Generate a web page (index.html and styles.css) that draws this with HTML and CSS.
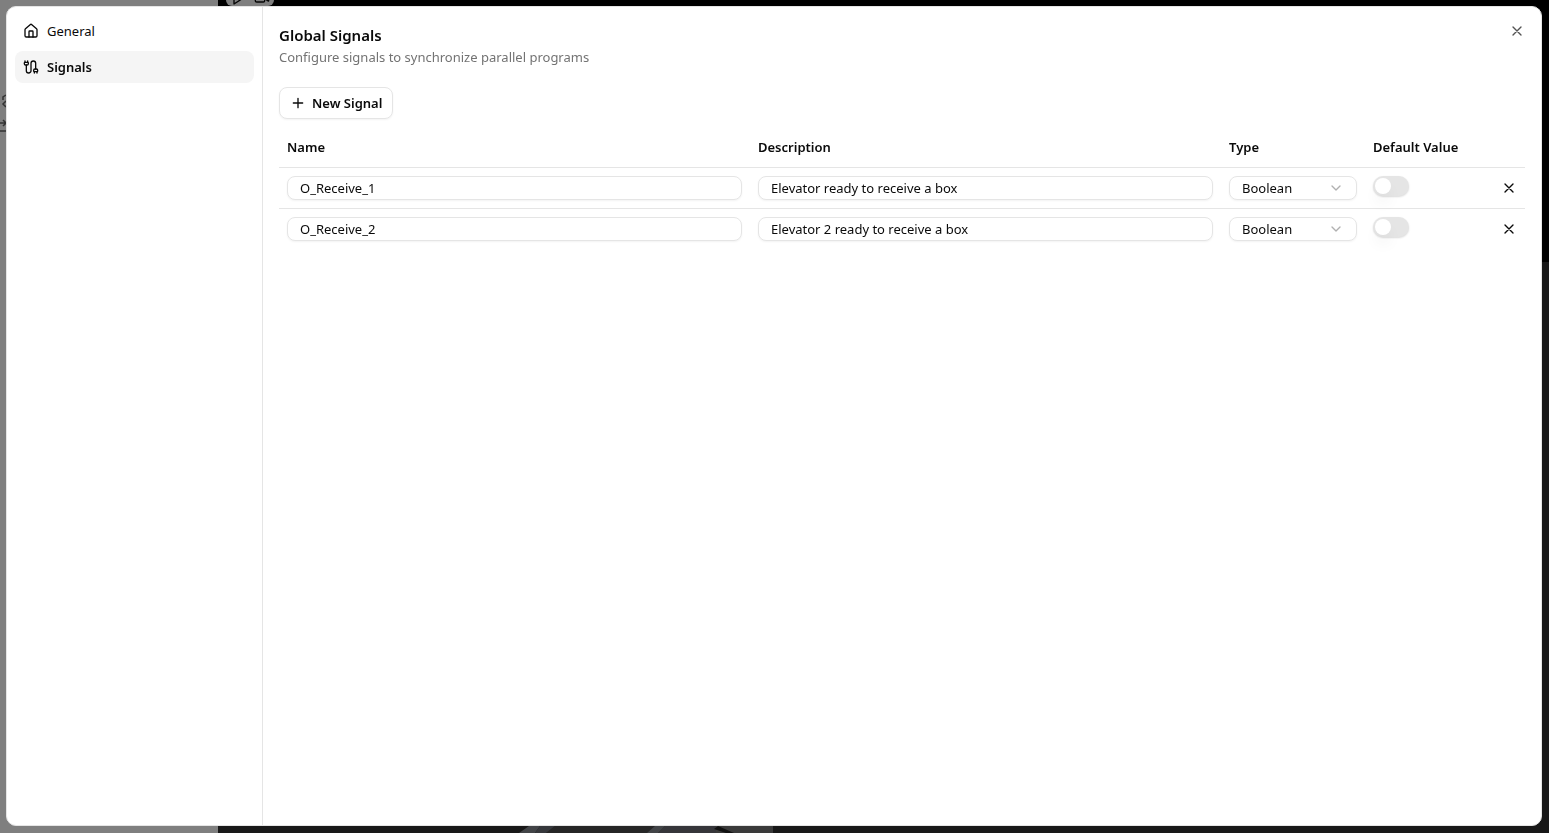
FILE: index.html
```html
<!DOCTYPE html>
<html lang="en">
<head>
    <meta charset="UTF-8">
    <meta name="viewport" content="width=device-width, initial-scale=1.0">
    <title>Settings - Global Signals</title>
    <link rel="stylesheet" href="styles.css">
</head>
<body>
    <!-- Editor behind the dialog -->
    <div class="editor" aria-hidden="true">
        <div class="editor-panel">
            <svg width="8" height="40" viewBox="0 0 8 40" fill="none" stroke="#666" stroke-width="1.5">
                <path d="M3 6V3l3-2M6 7L3 10l3 3M0 29h6M3 26l3 3-3 3M0 37h8"/>
            </svg>
        </div>
        <div class="editor-view">
            <div class="view-tools">
                <svg width="16" height="16" viewBox="0 0 24 24" class="icon"><path d="m6 3 14 9-14 9z"/></svg>
                <svg width="16" height="16" viewBox="0 0 24 24" class="icon"><path d="m16 13 5.2 3.5a.5.5 0 0 0 .8-.4V7.900a.5.5 0 0 0-.8-.4L16 10.500"/><rect x="2" y="6" width="14" height="12" rx="2"/></svg>
            </div>
            <div class="view-floor">
                <svg width="600" height="7" viewBox="0 0 600 7">
                    <path fill="#4c4c4c" d="M337 0H555V7H328z"/>
                    <path fill="#84898f" d="M311 0H322L317 7H301zM437 0H447L440 7H429z"/>
                    <path fill="#6c7078" d="M322 0H337L328 7H317z"/>
                    <path fill="#6c6d75" d="M447 0H498V7H440z"/>
                    <path fill="#747474" d="M498 0H555V7H498z"/>
                    <path fill="#222" d="M500 0L516 7H508L496 3z"/>
                </svg>
            </div>
        </div>
    </div>
    <div class="overlay"></div>

    <div class="dialog" role="dialog" aria-labelledby="dialog-title">
        <nav class="sidebar">
            <button type="button" class="nav-item">
                <svg width="16" height="16" viewBox="0 0 24 24" class="icon">
                    <path d="M15 21v-8a1 1 0 0 0-1-1h-4a1 1 0 0 0-1 1v8"/>
                    <path d="M3 10a2 2 0 0 1 .709-1.528l7-5.999a2 2 0 0 1 2.582 0l7 5.999A2 2 0 0 1 21 10v9a2 2 0 0 1-2 2H5a2 2 0 0 1-2-2z"/>
                </svg>
                General
            </button>
            <button type="button" class="nav-item active">
                <svg width="16" height="16" viewBox="0 0 24 24" class="icon">
                    <path d="M17 21v-2a1 1 0 0 1-1-1v-1a2 2 0 0 1 2-2h2a2 2 0 0 1 2 2v1a1 1 0 0 1-1 1"/>
                    <path d="M19 15V6.500a1 1 0 0 0-7 0v11a1 1 0 0 1-7 0V9"/>
                    <path d="M21 21v-2h-4"/>
                    <path d="M3 5h4V3"/>
                    <path d="M7 5a1 1 0 0 1 1 1v1a2 2 0 0 1-2 2H4a2 2 0 0 1-2-2V6a1 1 0 0 1 1-1V3"/>
                </svg>
                Signals
            </button>
        </nav>

        <main class="content">
            <h2 id="dialog-title">Global Signals</h2>
            <p class="subtitle">Configure signals to synchronize parallel programs</p>

            <button type="button" class="new-signal">
                <svg width="16" height="16" viewBox="0 0 24 24" class="icon"><path d="M5 12h14M12 5v14"/></svg>
                New Signal
            </button>

            <table class="signals">
                <thead>
                    <tr>
                        <th>Name</th>
                        <th>Description</th>
                        <th class="col-type">Type</th>
                        <th class="col-default">Default Value</th>
                        <th class="col-remove"></th>
                    </tr>
                </thead>
                <tbody>
                    <tr>
                        <td><input type="text" class="field" value="O_Receive_1" aria-label="Name"></td>
                        <td><input type="text" class="field" value="Elevator ready to receive a box" aria-label="Description"></td>
                        <td>
                            <div class="select">
                                <select class="field" aria-label="Type">
                                    <option>Boolean</option>
                                </select>
                                <svg width="16" height="16" viewBox="0 0 24 24" class="icon"><path d="m6 9 6 6 6-6"/></svg>
                            </div>
                        </td>
                        <td><input type="checkbox" class="switch" role="switch" aria-label="Default Value"></td>
                        <td>
                            <button type="button" class="icon-button" aria-label="Remove">
                                <svg width="16" height="16" viewBox="0 0 24 24" class="icon"><path d="M18 6 6 18M6 6l12 12"/></svg>
                            </button>
                        </td>
                    </tr>
                    <tr>
                        <td><input type="text" class="field" value="O_Receive_2" aria-label="Name"></td>
                        <td><input type="text" class="field" value="Elevator 2 ready to receive a box" aria-label="Description"></td>
                        <td>
                            <div class="select">
                                <select class="field" aria-label="Type">
                                    <option>Boolean</option>
                                </select>
                                <svg width="16" height="16" viewBox="0 0 24 24" class="icon"><path d="m6 9 6 6 6-6"/></svg>
                            </div>
                        </td>
                        <td><input type="checkbox" class="switch" role="switch" aria-label="Default Value"></td>
                        <td>
                            <button type="button" class="icon-button" aria-label="Remove">
                                <svg width="16" height="16" viewBox="0 0 24 24" class="icon"><path d="M18 6 6 18M6 6l12 12"/></svg>
                            </button>
                        </td>
                    </tr>
                </tbody>
            </table>
        </main>

        <button type="button" class="icon-button close" aria-label="Close">
            <svg width="16" height="16" viewBox="0 0 24 24" class="icon"><path d="M18 6 6 18M6 6l12 12"/></svg>
        </button>
    </div>
</body>
</html>
```
FILE: styles.css
```css
* {
    box-sizing: border-box;
}
body {
    margin: 0;
    font-family: "Segoe UI", "Noto Sans", "Open Sans", sans-serif;
    font-size: 13px;
    line-height: 20px;
    color: #0a0a0a;
}
button, input, select {
    font: inherit;
    color: inherit;
}
button {
    cursor: pointer;
}
.icon {
    flex: none;
    fill: none;
    stroke: currentColor;
    stroke-width: 2;
    stroke-linecap: round;
    stroke-linejoin: round;
}

/* Editor background */
.editor {
    display: flex;
    height: 100vh;
    overflow: hidden;
}
.editor-panel {
    width: 218px;
    padding-top: 94px;
    background: #fff;
}
.editor-view {
    flex: 1;
    display: flex;
    flex-direction: column;
    background: #000;
}
.view-tools {
    display: flex;
    align-items: flex-end;
    gap: 8px;
    width: 48px;
    height: 6px;
    margin-left: 8px;
    padding: 0 4px;
    background: #fff;
    border-radius: 0 0 8px 8px;
}
.view-floor {
    flex: 1;
    display: flex;
    align-items: flex-end;
    margin-top: 256px;
    background: #303030;
}
.overlay {
    position: fixed;
    inset: 0;
    background: rgba(0, 0, 0, 0.5);
}

/* Dialog */
.dialog {
    position: fixed;
    inset: 6px 7px 7px 6px;
    display: flex;
    background: #fff;
    border: 1px solid #e5e5e5;
    border-radius: 10px;
    overflow: hidden;
}
.sidebar {
    display: flex;
    flex-direction: column;
    gap: 4px;
    width: 256px;
    padding: 8px;
    border-right: 1px solid #e5e5e5;
}
.nav-item {
    display: flex;
    align-items: center;
    gap: 8px;
    height: 32px;
    padding: 0 8px;
    background: none;
    border: none;
    border-radius: 8px;
}
.nav-item.active {
    background: #f5f5f5;
    font-weight: 600;
}
.content {
    flex: 1;
    padding: 16px;
}
h2 {
    margin: 0;
    font-size: 15px;
    font-weight: 600;
    line-height: 24px;
}
.subtitle {
    margin: 0 0 20px;
    color: #737373;
}
.new-signal {
    display: flex;
    align-items: center;
    gap: 6px;
    height: 32px;
    padding: 0 10px;
    background: #fff;
    border: 1px solid #e5e5e5;
    border-radius: 8px;
    font-weight: 600;
    box-shadow: 0 1px 2px rgba(0, 0, 0, 0.05);
}

/* Signals table */
.signals {
    width: 100%;
    margin-top: 8px;
    table-layout: fixed;
    border-collapse: separate;
    border-spacing: 0;
}
.signals th {
    height: 41px;
    padding: 0 8px;
    text-align: left;
    font-weight: 600;
    border-bottom: 1px solid #e5e5e5;
}
.signals td {
    height: 41px;
    padding: 8px;
    vertical-align: top;
    border-bottom: 1px solid #e5e5e5;
}
.signals tr:last-child td {
    border-bottom: none;
}
.signals .col-type {
    width: 144px;
}
.signals .col-default {
    width: 128px;
}
.signals .col-remove {
    width: 32px;
}
.field {
    display: block;
    width: 100%;
    height: 24px;
    padding: 0 12px;
    appearance: none;
    background: #fff;
    border: 1px solid #e5e5e5;
    border-radius: 8px;
    box-shadow: 0 1px 2px rgba(0, 0, 0, 0.05);
}
.select {
    position: relative;
}
.select .icon {
    position: absolute;
    right: 13px;
    top: 4px;
    color: #b0b0b0;
    pointer-events: none;
}
.switch {
    display: block;
    width: 36px;
    height: 20px;
    margin: 0;
    padding: 2px;
    appearance: none;
    background: #e5e5e5;
    border-radius: 10px;
    box-shadow: 0 1px 2px rgba(0, 0, 0, 0.15);
}
.switch::before {
    content: "";
    display: block;
    width: 16px;
    height: 16px;
    background: #fff;
    border-radius: 50%;
    box-shadow: 0 10px 15px -3px rgba(0, 0, 0, 0.1);
}
.switch:checked {
    background: #171717;
}
.switch:checked::before {
    margin-left: 16px;
}
.icon-button {
    display: flex;
    align-items: center;
    justify-content: center;
    width: 16px;
    height: 24px;
    padding: 0;
    background: none;
    border: none;
}
.close {
    position: absolute;
    top: 12px;
    right: 16px;
    opacity: 0.7;
}
```
